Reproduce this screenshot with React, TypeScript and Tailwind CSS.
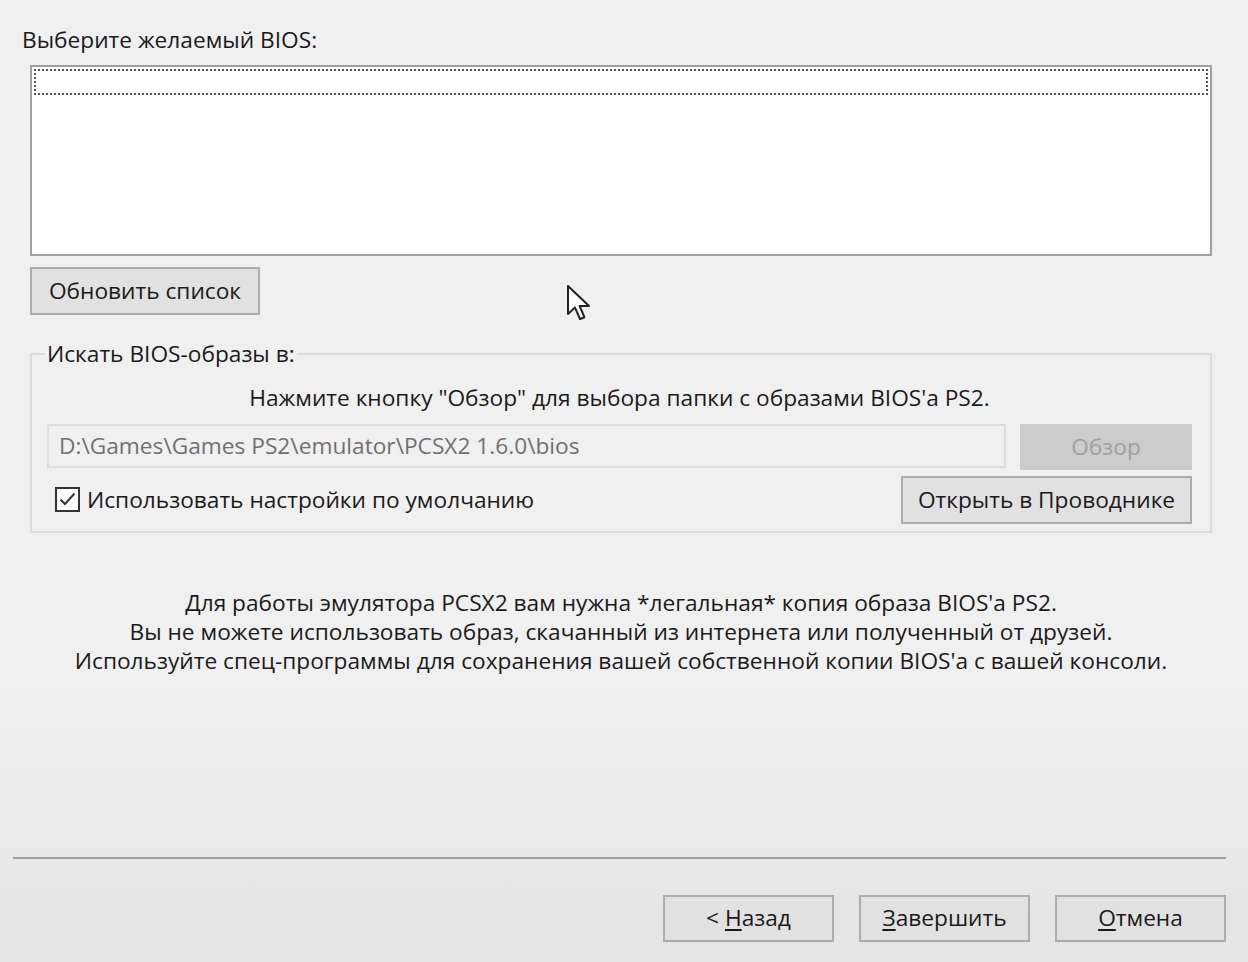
import React from 'react';

const font = { fontFamily: '"Open Sans", "Noto Sans", sans-serif' };

const Btn: React.FC<{ className?: string; children: React.ReactNode; disabled?: boolean }> = ({ className = '', children, disabled }) => (
  <button
    className={
      'flex items-center justify-center border-2 text-[22.7px] ' +
      (disabled ? 'bg-[#cccccc] border-[#cccccc] text-[#a0a0a0] ' : 'bg-[#e1e1e1] border-[#adadad] text-[#1a1a1a] ') +
      className
    }
  >
    {children}
  </button>
);

export default function App() {
  return (
    <div
      className="relative w-[1248px] h-[962px] overflow-hidden bg-gradient-to-b from-[#f0f0f0] from-70% to-[#e4e4e4] text-[#1a1a1a]"
      style={font}
    >
      <div className="flex flex-col pl-[30px] pr-[36px]">
        {/* BIOS list */}
        <div className="pt-[24px] -ml-[8px] text-[22.7px] leading-[32px]">Выберите желаемый BIOS:</div>
        <div className="mt-[9px] h-[191px] border-2 border-[#a0a0a0] bg-white p-[2px]">
          <div className="h-[26px] border-2 border-dotted border-[#555555]" />
        </div>
        <Btn className="mt-[11px] w-[230px] h-[48px]">Обновить список</Btn>

        {/* Search group */}
        <fieldset className="mt-[24px] h-[194px] border-2 border-[#dcdcdc] pl-[15px] pr-[18px] pb-[8px]">
          <legend className="-ml-[2px] px-[2px] text-[22.7px] leading-[30px]">Искать BIOS-образы в:</legend>
          <div className="text-center text-[22.7px] leading-[32px] mt-[13px]">
            Нажмите кнопку "Обзор" для выбора папки с образами BIOS'а PS2.
          </div>
          <div className="flex gap-[14px] mt-[10px]">
            <div className="flex-1 h-[44px] border-2 border-[#dcdcdc] bg-[#f0f0f0] flex items-center pl-[10px] text-[22.7px] text-[#707070]">
              D:\Games\Games PS2\emulator\PCSX2 1.6.0\bios
            </div>
            <Btn disabled className="w-[172px] h-[46px]">Обзор</Btn>
          </div>
          <div className="flex items-center justify-between mt-[6px]">
            <label className="flex items-center gap-[7px] ml-[8px] text-[22.7px]">
              <span className="w-[25px] h-[25px] border-2 border-[#333333] bg-white flex items-center justify-center">
                <svg width="19" height="19" viewBox="0 0 19 19">
                  <path d="M2.5 9.5 L7 14 L16.5 3.5" fill="none" stroke="#333333" strokeWidth="2" />
                </svg>
              </span>
              Использовать настройки по умолчанию
            </label>
            <Btn className="w-[291px] h-[48px]">Открыть в Проводнике</Btn>
          </div>
        </fieldset>

        {/* Legal notice */}
        <div className="mt-[55px] text-center text-[22.7px] leading-[29px]">
          <div>Для работы эмулятора PCSX2 вам нужна *легальная* копия образа BIOS'а PS2.</div>
          <div>Вы не можете использовать образ, скачанный из интернета или полученный от друзей.</div>
          <div>Используйте спец-программы для сохранения вашей собственной копии BIOS'а с вашей консоли.</div>
        </div>
      </div>

      {/* Footer */}
      <div className="absolute left-0 right-0 top-[857px]">
        <div className="ml-[13px] mr-[22px] h-[2px] bg-[#a0a0a0]" />
        <div className="flex justify-end gap-[25px] mr-[22px] mt-[36px]">
          <Btn className="w-[171px] h-[47px]">
            &lt;&nbsp;<span className="underline underline-offset-[3px]">Н</span>азад
          </Btn>
          <Btn className="w-[171px] h-[47px]">
            <span className="underline underline-offset-[3px]">З</span>авершить
          </Btn>
          <Btn className="w-[171px] h-[47px]">
            <span className="underline underline-offset-[3px]">О</span>тмена
          </Btn>
        </div>
      </div>

      {/* Mouse cursor */}
      <svg className="absolute left-[566px] top-[284px]" width="26" height="38" viewBox="0 0 13 19">
        <path
          d="M1 1 L1 15 L4.5 11.8 L7 17.5 L9.2 16.6 L6.8 11 L11.5 11 Z"
          fill="#ffffff"
          stroke="#222222"
          strokeWidth="1"
          strokeLinejoin="round"
        />
      </svg>
    </div>
  );
}
